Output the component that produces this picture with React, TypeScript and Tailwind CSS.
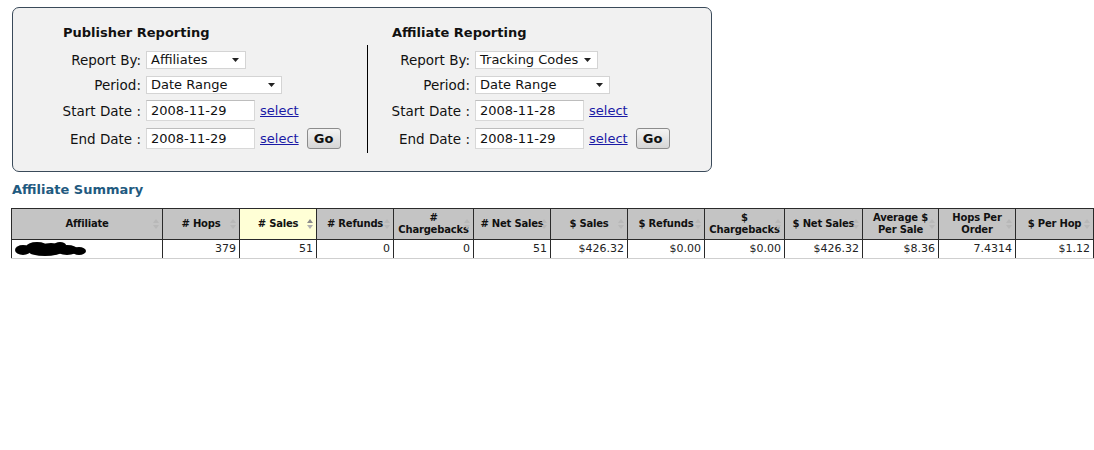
import React from "react";

const font = { fontFamily: '"DejaVu Sans", Verdana, sans-serif' };

const Select = ({ value, width }: { value: string; width: string }) => (
  <div
    className={`flex h-[18px] items-center justify-between border border-[#d4d4d4] bg-white pl-[4px] pr-[6px] text-[13px] leading-[16px] text-[#111] ${width}`}
  >
    <span>{value}</span>
    <svg width="7" height="4" viewBox="0 0 7 4">
      <path d="M0 0h7L3.5 4z" fill="#222" />
    </svg>
  </div>
);

const DateInput = ({ value }: { value: string }) => (
  <div className="flex h-[21px] w-[109px] items-center border border-[#d8d8d8] border-t-[#bdbdbd] bg-white pl-[4px] text-[13px] leading-[16px] text-[#111]">
    {value}
  </div>
);

const GoButton = () => (
  <button className="ml-[8px] h-[21px] w-[34px] rounded-[3px] border border-[#8c8c8c] bg-gradient-to-b from-[#f4f4f4] to-[#d6d6d6] text-[13px] leading-[16px] font-bold text-[#111]">
    Go
  </button>
);

const Row = ({ label, children, className = "" }: { label: string; children: React.ReactNode; className?: string }) => (
  <div className={`flex items-center leading-[16px] ${className}`}>
    <div className="w-[91px] pr-[5px] text-right text-[13.5px] text-[#111]">{label}</div>
    {children}
  </div>
);

const SelectLink = () => (
  <a href="#" className="ml-[5px] text-[13px] text-[#1a1aa6] underline">
    select
  </a>
);

const ReportForm = ({
  title,
  reportBy,
  reportWidth,
  periodWidth,
  start,
  end,
}: {
  title: string;
  reportBy: string;
  reportWidth: string;
  periodWidth: string;
  start: string;
  end: string;
}) => (
  <div className="flex flex-col pt-[17px]">
    <div className="ml-[8px] text-[13px] leading-[16px] font-bold text-[#111]">{title}</div>
    <Row label="Report By:" className="mt-[10px]">
      <Select value={reportBy} width={reportWidth} />
    </Row>
    <Row label="Period:" className="mt-[7px]">
      <Select value="Date Range" width={periodWidth} />
    </Row>
    <Row label="Start Date :" className="mt-[6px]">
      <DateInput value={start} />
      <SelectLink />
    </Row>
    <Row label="End Date :" className="mt-[7px]">
      <DateInput value={end} />
      <SelectLink />
      <GoButton />
    </Row>
  </div>
);

// faint up/down arrows at the right edge of each header cell
const SortIcon = ({ active }: { active?: boolean }) => (
  <svg width="6" height="10" viewBox="0 0 6 10" className="absolute right-[3px] top-1/2 -translate-y-1/2">
    <path d="M0 4L3 0 6 4z" fill={active ? "#8a8a8a" : "#b8b8b8"} />
    <path d="M0 6L3 10 6 6z" fill={active ? "#b0b0b0" : "#b8b8b8"} />
  </svg>
);

const columns = [
  { label: "Affiliate", w: "w-[151px]" },
  { label: "# Hops", w: "w-[77px]" },
  { label: "# Sales", w: "w-[77px]", active: true },
  { label: "# Refunds", w: "w-[77px]" },
  { label: "# Chargebacks", w: "w-[80px]" },
  { label: "# Net Sales", w: "w-[77px]" },
  { label: "$ Sales", w: "w-[77px]" },
  { label: "$ Refunds", w: "w-[77px]" },
  { label: "$ Chargebacks", w: "w-[80px]" },
  { label: "$ Net Sales", w: "w-[78px]" },
  { label: "Average $ Per Sale", w: "w-[76px]" },
  { label: "Hops Per Order", w: "w-[77px]" },
  { label: "$ Per Hop", w: "w-[78px]" },
];

const values = ["379", "51", "0", "0", "51", "$426.32", "$0.00", "$0.00", "$426.32", "$8.36", "7.4314", "$1.12"];

const Blob = () => (
  <svg width="72" height="16" viewBox="0 0 72 16">
    <g fill="#000">
      <ellipse cx="8" cy="9" rx="8" ry="5" />
      <ellipse cx="22" cy="6" rx="11" ry="5" />
      <ellipse cx="36" cy="8" rx="13" ry="6" />
      <ellipse cx="52" cy="9" rx="11" ry="5" />
      <ellipse cx="64" cy="10" rx="7" ry="4" />
      <ellipse cx="30" cy="11" rx="16" ry="4" />
      <ellipse cx="45" cy="4" rx="6" ry="3" />
    </g>
  </svg>
);

export default function App() {
  return (
    <div className="min-h-[450px] bg-white pt-[7px]" style={font}>
      <div className="ml-[12px] flex h-[165px] w-[700px] rounded-[7px] border border-[#3a4a5a] bg-[#f1f1f1]">
        <div className="w-[354px] pl-[42px]">
          <ReportForm
            title="Publisher Reporting"
            reportBy="Affiliates"
            reportWidth="w-[100px]"
            periodWidth="w-[136px]"
            start="2008-11-29"
            end="2008-11-29"
          />
        </div>
        <div className="mt-[37px] h-[108px] w-px bg-black" />
        <div className="pl-[16px]">
          <ReportForm
            title="Affiliate Reporting"
            reportBy="Tracking Codes"
            reportWidth="w-[123px]"
            periodWidth="w-[135px]"
            start="2008-11-28"
            end="2008-11-29"
          />
        </div>
      </div>

      <div className="ml-[12px] mt-[10px] text-[13px] leading-[16px] font-bold text-[#1f5a80]">Affiliate Summary</div>

      <table className="ml-[11px] mt-[10px] w-[1082px] table-fixed border-collapse text-[11px]">
        <colgroup>
          {columns.map((c) => (
            <col key={c.label} className={c.w} />
          ))}
        </colgroup>
        <thead>
          <tr className="h-[31px]">
            {columns.map((c) => (
              <th
                key={c.label}
                className={`relative border border-[#2a2a2a] px-[1px] text-center text-[10px] leading-[12px] font-bold tracking-[-0.2px] text-[#111] ${
                  c.active ? "bg-[#ffffd6]" : "bg-[#c4c4c4]"
                }`}
              >
                {c.label}
                <SortIcon active={c.active} />
              </th>
            ))}
          </tr>
        </thead>
        <tbody>
          <tr className="h-[19px]">
            <td className="border-l border-r border-b border-l-[#2a2a2a] border-r-[#2a2a2a] border-b-[#cfcfcf] px-[3px]">
              <Blob />
            </td>
            {values.map((v, i) => (
              <td
                key={i}
                className="border-r border-b border-r-[#2a2a2a] border-b-[#cfcfcf] px-[3px] text-right text-[#222]"
              >
                {v}
              </td>
            ))}
          </tr>
        </tbody>
      </table>
    </div>
  );
}
